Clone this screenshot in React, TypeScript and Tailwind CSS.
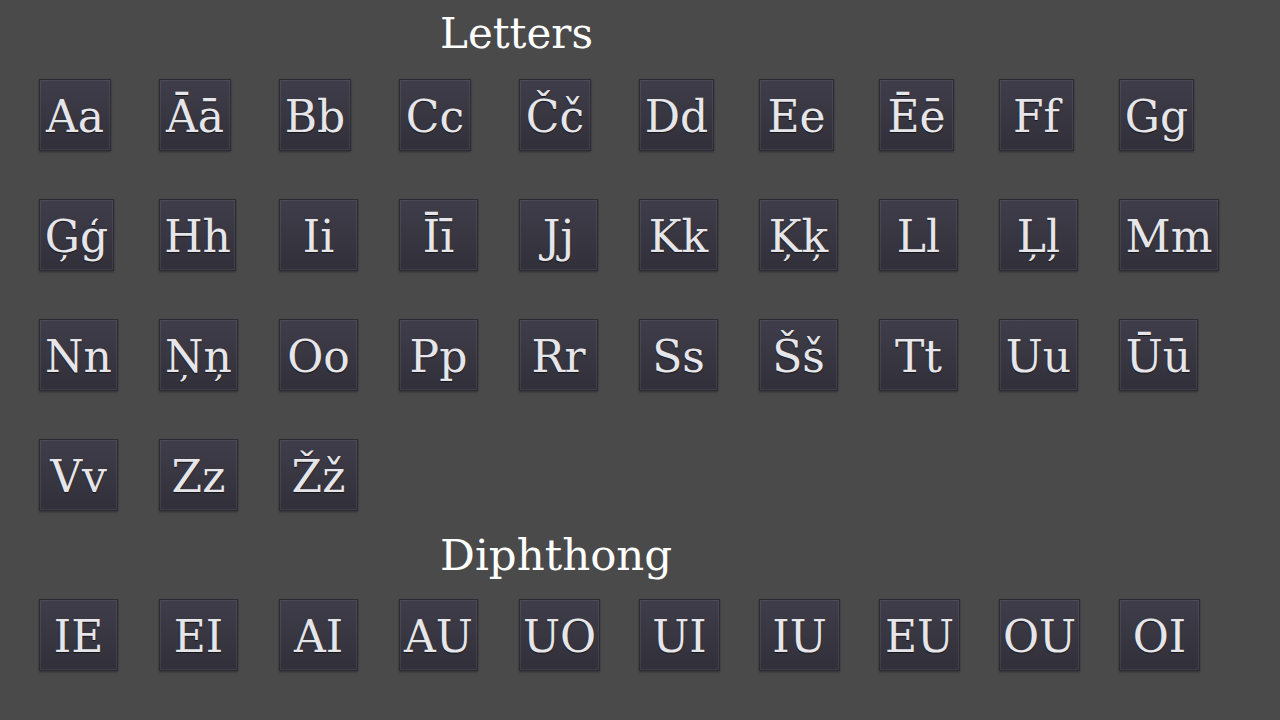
import React from "react";

type K = [string, number];

const letters: K[] = [
  ["Aa", 72], ["Āā", 72], ["Bb", 72], ["Cc", 72], ["Čč", 72],
  ["Dd", 75], ["Ee", 75], ["Ēē", 75], ["Ff", 75], ["Gg", 75],
  ["Ģģ", 75], ["Hh", 77], ["Ii", 79], ["Īī", 79], ["Jj", 79],
  ["Kk", 79], ["Ķķ", 79], ["Ll", 79], ["Ļļ", 79], ["Mm", 100],
  ["Nn", 79], ["Ņņ", 79], ["Oo", 79], ["Pp", 79], ["Rr", 79],
  ["Ss", 79], ["Šš", 79], ["Tt", 79], ["Uu", 79], ["Ūū", 79],
  ["Vv", 79], ["Zz", 79], ["Žž", 79],
];
const diph: K[] = [
  ["IE", 79], ["EI", 79], ["AI", 79], ["AU", 79], ["UO", 81],
  ["UI", 81], ["IU", 81], ["EU", 81], ["OU", 81], ["OI", 81],
];

function Key({ t, w }: { t: string; w: number }) {
  return (
    <div className="w-[120px] h-[120px] flex items-start">
      <div
        className="h-[72px] flex items-center justify-center border border-[#2c2b33] bg-gradient-to-b from-[#3e3d49] to-[#31303a] shadow-[inset_0_0_0_1px_rgba(255,255,255,0.07),0_1px_2px_rgba(0,0,0,0.35)] text-[#e6e6ea] text-[44px] leading-none whitespace-nowrap [text-shadow:0_1px_1px_rgba(0,0,0,0.6)]"
        style={{ width: w, fontFamily: '"DejaVu Serif", serif' }}
      >
        <span className="pt-[3px]">{t}</span>
      </div>
    </div>
  );
}

export default function App() {
  return (
    <div
      className="w-[1280px] h-[720px] bg-[#4a4a4a] overflow-hidden"
      style={{ fontFamily: '"DejaVu Serif", serif' }}
    >
      <div className="pl-[440px] pt-[13px] h-[79px] text-white text-[42px] leading-none">
        Letters
      </div>
      <div className="pl-[39px] flex flex-wrap w-[1280px] h-[440px]">
        {letters.map(([l, w]) => (
          <Key key={l} t={l} w={w} />
        ))}
      </div>
      <div className="pl-[440px] pt-[15px] h-[80px] text-white text-[43.5px] leading-none">
        Diphthong
      </div>
      <div className="pl-[39px] flex flex-wrap w-[1280px]">
        {diph.map(([l, w]) => (
          <Key key={l} t={l} w={w} />
        ))}
      </div>
    </div>
  );
}
